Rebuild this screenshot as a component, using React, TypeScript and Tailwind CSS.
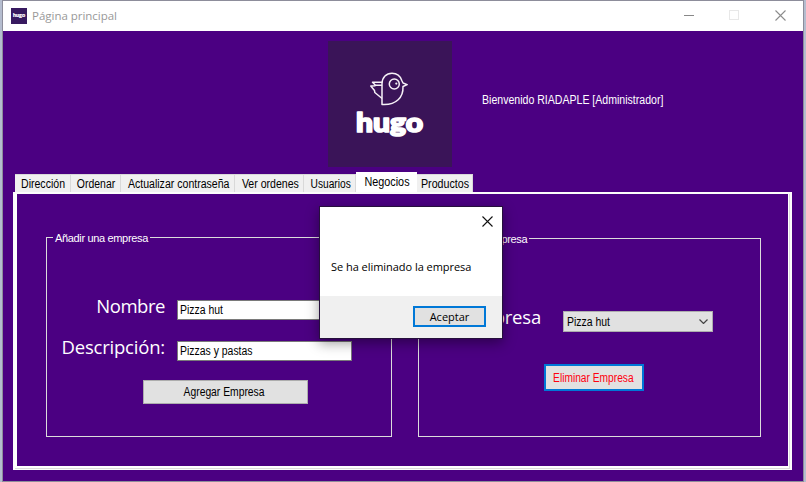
import type { ReactNode } from "react";

const tabs = [
  { label: "Dirección", width: "w-[56px]", scale: "scale-x-[0.88]" },
  { label: "Ordenar", width: "w-[50px]", scale: "scale-x-[0.87]" },
  { label: "Actualizar contraseña", width: "w-[114px]", scale: "scale-x-[0.88]" },
  { label: "Ver ordenes", width: "w-[69px]", scale: "scale-x-[0.88]" },
  { label: "Usuarios", width: "w-[52px]", scale: "scale-x-[0.85]" },
  { label: "Negocios", width: "w-[61px]", scale: "scale-x-[0.9]" },
  { label: "Productos", width: "w-[56px]", scale: "scale-x-[0.89]" },
];

function Logo() {
  return (
    <svg viewBox="0 0 124 126" className="block h-[126px] w-[124px] bg-[#3a1458]">
      <g fill="none" stroke="#f6f1f7" strokeWidth="1.5" strokeLinejoin="round" strokeLinecap="round">
        <path d="M54 63.500V43C54 36 58.500 32.200 64 32.200C69 32.200 72.500 35.500 73.800 39.500L75 42L79.200 43.600L75 45.500C75.500 56 68.500 64.500 54 63.500Z" />
        <circle cx="66.3" cy="43" r="5" />
        <path d="M53.500 41.300H44.500L47.500 44.300H53.500M47 44.700L42.800 45L46.500 49.500L46.800 51.500L53.500 57" />
      </g>
      <circle cx="68.3" cy="42.600" r="1.1" fill="#eee" />
      <text x="28" y="91" textLength="67" lengthAdjust="spacingAndGlyphs" fill="#fff" stroke="#fff" strokeWidth="1.700" strokeLinejoin="round" fontFamily="Lato, sans-serif" fontWeight="900" fontSize="26">
        hugo
      </text>
    </svg>
  );
}

function Cross({ color }: { color: string }) {
  return (
    <svg width="11" height="11" viewBox="0 0 11 11" className="shrink-0">
      <path d="M.5 .5l10 10M10.5 .5l-10 10" stroke={color} strokeWidth="1.1" />
    </svg>
  );
}

/** Condenses a caption to the proportions of the form's system font. */
function Narrow({ children, className = "origin-left scale-x-[0.87]" }: { children: ReactNode; className?: string }) {
  return <span className={`inline-block whitespace-nowrap ${className}`}>{children}</span>;
}

function GroupBox({ title, className, children }: { title: ReactNode; className: string; children: ReactNode }) {
  return (
    <section className={`border border-[#dcdcdc] ${className}`}>
      <h2 className="-mt-[7px] ml-[6px] h-[14px] w-fit bg-[#4b0082] pr-[2px] pl-[2px] text-[11px] leading-[15px] tracking-[-0.34px] whitespace-nowrap text-white">
        {title}
      </h2>
      {children}
    </section>
  );
}

export default function App() {
  return (
    <div className="relative h-[482px] w-[806px] overflow-hidden bg-[#b5bdcf] pr-[2px] pl-[2px] font-['Liberation_Sans',Arial,sans-serif] text-[12px]">
      <div className="h-[482px] border border-[#8d8d9b] bg-[#4b0082]">
        <header className="flex h-[30px] items-center bg-white">
          <div className="mt-[-1px] ml-[8px] flex h-4 w-4 items-center justify-center bg-[#381a60]">
            <svg viewBox="0 0 16 16" className="h-4 w-4">
              <text x="2" y="9" fontSize="5" fontWeight="900" fontFamily="Lato, sans-serif" fill="#fff" stroke="#fff" strokeWidth=".2" textLength="12" lengthAdjust="spacingAndGlyphs">hugo</text>
            </svg>
          </div>
          <h1 className="ml-[5px] font-['Open_Sans',sans-serif] text-[11.5px] leading-[30px] tracking-[-0.02px] text-[#999]">Página principal</h1>
          <div className="ml-auto flex items-center pr-[17px]">
            <div className="-mt-[2px] h-px w-[10px] bg-[#888]" />
            <div className="-mt-[2px] ml-[35px] h-[10px] w-[10px] border border-[#e8e8e8]" />
            <div className="-mt-[2px] ml-[36px]"><Cross color="#8c8c8c" /></div>
          </div>
        </header>

        <main className="h-[450px] pl-[10px]">
          <div className="flex h-[141px] pt-[10px] pl-[315px]">
            <Logo />
            <p className="mt-[52px] ml-[30px] leading-[14px] text-white"><Narrow className="origin-left scale-x-[0.88]">Bienvenido RIADAPLE [Administrador]</Narrow></p>
          </div>
          <nav className="flex h-5 items-end pl-[2px]">
            {tabs.map((tab) => (
              <button
                key={tab.label}
                className={`${tab.width} ${tab.label === "Negocios" ? "h-5 bg-white pt-[2px]" : "h-[18px] border-t border-r border-[#d9d9d9] bg-[#f0f0f0] pt-px"} flex justify-center pl-[2px] leading-[17px] text-black`}
              >
                <Narrow className={tab.scale}>{tab.label}</Narrow>
              </button>
            ))}
          </nav>
          <div className="h-[278px] w-[779px] border-2 border-b border-[#fcfcfc] bg-[#dcdcdc]">
            <div className="flex h-[274px] w-[774px] gap-[26px] border-r border-b-2 border-l-2 border-white bg-[#4b0082] pt-[43px] pl-[29px]">
              <GroupBox title="Añadir una empresa" className="h-[200px] w-[346px] shrink-0">
                <div className="mt-[53px] grid grid-cols-[118px_175px] items-start gap-x-[12px] text-white">
                  <label className="h-[41px] text-right font-['Open_Sans',sans-serif] text-[18.5px] leading-[15px] tracking-[-0.45px]">Nombre</label>
                  <div className="mt-[2px] h-5 border border-[#7a7a7a] bg-white pl-[2px] leading-[18px] text-black"><Narrow>Pizza hut</Narrow></div>
                  <label className="h-[39px] text-right font-['Open_Sans',sans-serif] text-[18.5px] leading-[15px] tracking-[-0.2px] whitespace-nowrap">Descripción:</label>
                  <div className="mt-[2px] h-5 border border-[#7a7a7a] bg-white pl-[2px] leading-[18px] text-black"><Narrow>Pizzas y pastas</Narrow></div>
                </div>
                <button className="mt-[2px] ml-[96px] flex h-6 w-[165px] justify-center border border-[#adadad] bg-[#e1e1e1] pr-[2px] leading-[23px] text-black"><Narrow className="scale-x-[0.86]">Agregar Empresa</Narrow></button>
              </GroupBox>
              <GroupBox title="Eliminar una empresa" className="mt-px h-[199px] w-[343px] shrink-0">
                <div className="mt-[61px] flex items-start">
                  <label className="w-[122px] text-right font-['Open_Sans',sans-serif] text-[18.5px] leading-[20px] tracking-[-0.2px] text-white">Empresa</label>
                  <div className="mt-[4px] ml-[22px] flex h-[21px] w-[150px] items-center border border-[#adadad] bg-[#e1e1e1] pr-[4px] pl-[3px] text-black">
                    <Narrow>Pizza hut</Narrow>
                    <svg className="ml-auto h-[5px] w-[9px]" viewBox="0 0 9 5" fill="none"><path d="M.5 .5l4 4 4-4" stroke="#444" strokeWidth="1.200" /></svg>
                  </div>
                </div>
                <button className="mt-[32px] ml-[125px] flex h-[27px] w-[100px] justify-center border-2 border-[#0078d7] bg-[#e1e1e1] pr-[2px] leading-[24px] text-[#ff0010]"><Narrow className="scale-x-[0.85]">Eliminar Empresa</Narrow></button>
              </GroupBox>
            </div>
          </div>
        </main>
      </div>

      <div role="dialog" className="absolute top-[206px] left-[319px] flex h-[133px] w-[184px] flex-col border border-[#26103c] bg-white font-['Open_Sans',sans-serif] text-[11px] text-black shadow-[0_4px_12px_rgba(0,0,0,0.4)]">
        <div className="flex h-[28px] items-center justify-end pr-[9px]"><Cross color="#111" /></div>
        <p className="mt-[24px] ml-[11px] leading-[15px] tracking-[-0.04px] whitespace-nowrap">Se ha eliminado la empresa</p>
        <footer className="mt-auto flex h-[42px] justify-end bg-[#f0f0f0] pt-[10px] pr-[16px]">
          <button className="h-[21px] w-[73px] border-2 border-[#0078d7] bg-[#e1e1e1] leading-[17px]">Aceptar</button>
        </footer>
      </div>
    </div>
  );
}
